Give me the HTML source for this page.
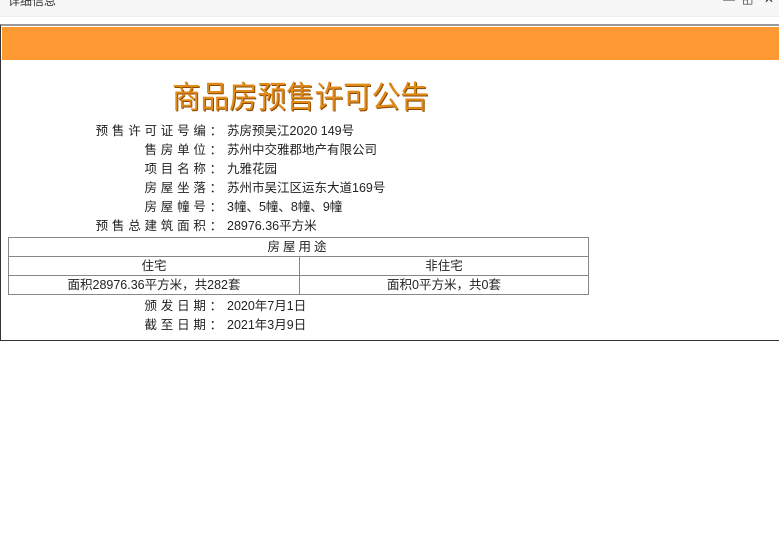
<!DOCTYPE html>
<html><head><meta charset="utf-8"><style>
*{margin:0;padding:0;box-sizing:border-box}
body{width:779px;height:540px;background:#fff;position:relative;overflow:hidden;font-family:"Liberation Sans","Noto Sans CJK SC",sans-serif;font-size:12.5px;color:#222}
.tb{position:absolute;left:0;top:0;width:779px;height:17px;background:#f7f7f7;border-bottom:1px solid #ececec}
.tb span{position:absolute;left:8px;top:-8px;font-size:12px;color:#333}
.ic{position:absolute;top:-5px;font-size:13px;color:#333}
.frame{position:absolute;left:0;top:24px;width:781px;height:317px;border:1px solid #333;border-top:2px solid #999}
.band{position:absolute;left:2px;top:27px;width:777px;height:33px;background:#ff9933}
.title{position:absolute;left:172px;top:72px;font-size:31px;font-family:"Noto Sans CJK SC",sans-serif;color:#e08a1a;transform:scaleX(0.92);transform-origin:left top;text-shadow:1px 1px 0 #8a4a00}
.r{position:absolute;height:19px;line-height:19px;white-space:nowrap}
.l{text-align:right;width:226px;left:0;letter-spacing:3.8px}
.v{left:227px}
table{position:absolute;left:8px;top:237px;width:581px;border-collapse:collapse}
td{border:1px solid #888;height:19px;line-height:17px;text-align:center;font-size:12.5px;padding:0}
</style></head><body>
<div class="tb"><span>详细信息</span><span class="ic" style="left:723px">—</span><span class="ic" style="left:742px">◱</span><span class="ic" style="left:764px">✕</span></div>
<div class="frame"></div>
<div class="band"></div>
<div class="title">商品房预售许可公告</div>
<div class="r l" style="top:122px">预售许可证号编：</div><div class="r v" style="top:122px">苏房预吴江2020 149号</div>
<div class="r l" style="top:141px">售房单位：</div><div class="r v" style="top:141px">苏州中交雅郡地产有限公司</div>
<div class="r l" style="top:160px">项目名称：</div><div class="r v" style="top:160px">九雅花园</div>
<div class="r l" style="top:179px">房屋坐落：</div><div class="r v" style="top:179px">苏州市吴江区运东大道169号</div>
<div class="r l" style="top:198px">房屋幢号：</div><div class="r v" style="top:198px">3幢、5幢、8幢、9幢</div>
<div class="r l" style="top:217px">预售总建筑面积：</div><div class="r v" style="top:217px">28976.36平方米</div>
<table>
<tr><td colspan="2" style="letter-spacing:3px">房屋用途</td></tr>
<tr><td style="width:291px">住宅</td><td>非住宅</td></tr>
<tr><td>面积28976.36平方米，共282套</td><td>面积0平方米，共0套</td></tr>
</table>
<div class="r l" style="top:297px">颁发日期：</div><div class="r v" style="top:297px">2020年7月1日</div>
<div class="r l" style="top:316px">截至日期：</div><div class="r v" style="top:316px">2021年3月9日</div>
</body></html>
